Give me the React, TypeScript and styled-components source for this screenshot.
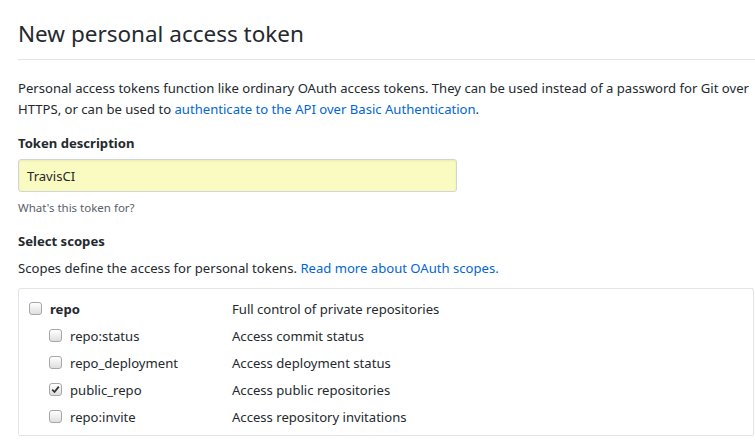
import React from "react";
import styled, { createGlobalStyle } from "styled-components";

const Global = createGlobalStyle`
  html, body { margin: 0; padding: 0; background: #fff; }
  body {
    font-family: "Noto Sans", "Open Sans", sans-serif;
    font-size: 13.1px;
    color: #24292e;
    overflow: hidden;
  }
`;

const Page = styled.div`
  width: 755px;
  height: 440px;
  padding: 0 0 0 18px;
  box-sizing: border-box;
  overflow: hidden;
`;

const Header = styled.div`
  height: 59px;
  border-bottom: 1px solid #e1e4e8;
  display: flex;
  align-items: flex-end;
`;

const Title = styled.h1`
  margin: 0 0 9px 0;
  font-size: 22.5px;
  font-weight: 400;
  line-height: 32px;
  color: #24292e;
`;

const Intro = styled.p`
  margin: 18px 0 0 0;
  line-height: 21px;
  width: 740px;
`;

const Link = styled.a`
  color: #0366d6;
  text-decoration: none;
`;

const Label = styled.div<{ $mt: number }>`
  font-weight: 700;
  margin-top: ${(p) => p.$mt}px;
  line-height: 20px;
`;

const Input = styled.div`
  margin-top: 6px;
  width: 439px;
  height: 33px;
  box-sizing: border-box;
  border: 1px solid #d1d5da;
  border-radius: 3px;
  background: #fafbc1;
  box-shadow: inset 0 1px 2px rgba(27, 31, 35, 0.075);
  display: flex;
  align-items: center;
  padding-left: 8px;
`;

const Note = styled.div`
  margin-top: 7px;
  font-size: 11.5px;
  color: #586069;
  line-height: 17px;
`;

const Desc = styled.div`
  margin-top: 7px;
  line-height: 20px;
`;

const ScopeBox = styled.div`
  margin-top: 10px;
  width: 734px;
  border: 1px solid #e1e4e8;
  border-radius: 3px;
  border-bottom: none;
  padding-top: 6px;
`;

const Group = styled.div`
  border-bottom: 1px solid #e1e4e8;
  padding-bottom: 5px;
`;

const Row = styled.div<{ $sub?: boolean }>`
  display: grid;
  grid-template-columns: ${(p) => (p.$sub ? 183 : 203)}px 1fr;
  height: 27px;
  align-items: center;
  padding-left: ${(p) => (p.$sub ? 30 : 10)}px;
`;

const Name = styled.div<{ $bold?: boolean }>`
  display: flex;
  align-items: center;
  gap: 8px;
  font-weight: ${(p) => (p.$bold ? 700 : 400)};
`;

const Check = styled.span`
  width: 13px;
  height: 13px;
  box-sizing: border-box;
  border: 1px solid #a7a7a7;
  border-radius: 3px;
  background: linear-gradient(#ffffff, #dedede);
  display: inline-flex;
  align-items: center;
  justify-content: center;
  flex: none;
`;

const scopes = [
  { name: "repo:status", desc: "Access commit status" },
  { name: "repo_deployment", desc: "Access deployment status" },
  { name: "public_repo", desc: "Access public repositories", on: true },
  { name: "repo:invite", desc: "Access repository invitations" },
];

export default function App() {
  return (
    <>
      <Global />
      <Page>
        <Header>
          <Title>New personal access token</Title>
        </Header>
        <Intro>
          Personal access tokens function like ordinary OAuth access tokens. They can be used instead of a password for Git over HTTPS, or can be used to{" "}
          <Link>authenticate to the API over Basic Authentication</Link>.
        </Intro>
        <Label $mt={13}>Token description</Label>
        <Input>TravisCI</Input>
        <Note>What's this token for?</Note>
        <Label $mt={15}>Select scopes</Label>
        <Desc>
          Scopes define the access for personal tokens. <Link>Read more about OAuth scopes.</Link>
        </Desc>
        <ScopeBox>
          <Group>
            <Row>
              <Name $bold>
                <Check />
                repo
              </Name>
              <div>Full control of private repositories</div>
            </Row>
            {scopes.map((s) => (
              <Row $sub key={s.name}>
                <Name>
                  <Check>
                    {s.on && (
                      <svg width="9" height="9" viewBox="0 0 9 9">
                        <path d="M1.2 4.6 L3.5 7 L7.8 1.6" fill="none" stroke="#333" strokeWidth="1.8" />
                      </svg>
                    )}
                  </Check>
                  {s.name}
                </Name>
                <div>{s.desc}</div>
              </Row>
            ))}
          </Group>
        </ScopeBox>
      </Page>
    </>
  );
}
